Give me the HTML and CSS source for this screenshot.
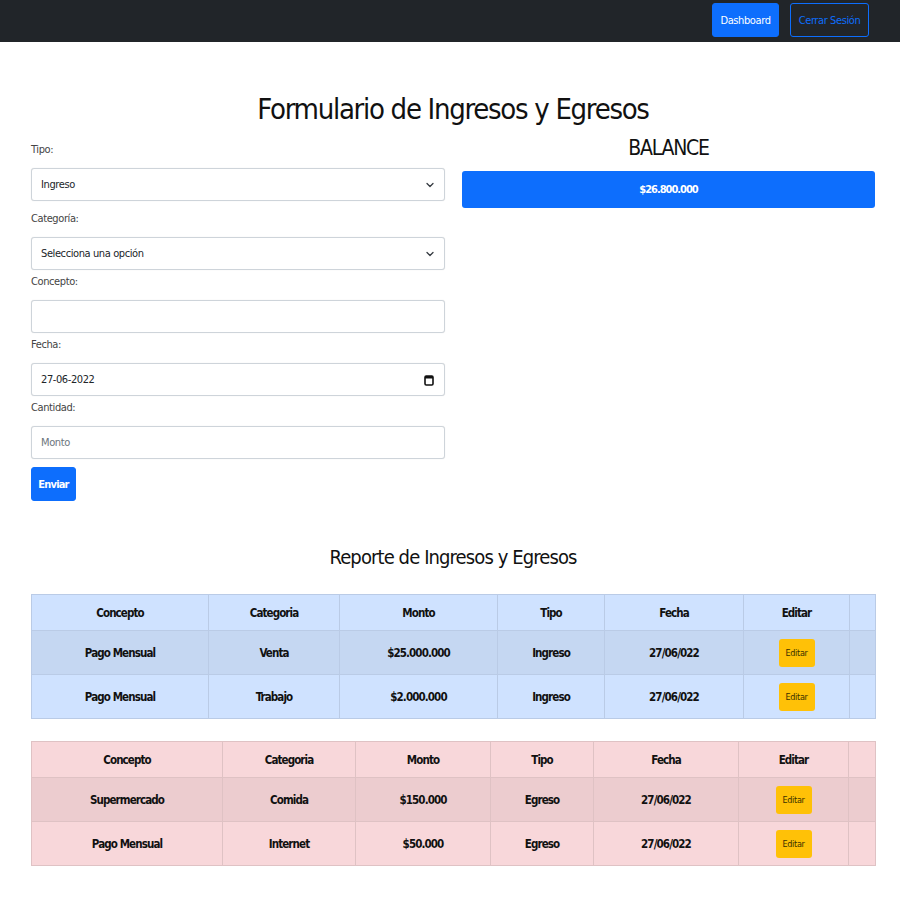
FILE: index.html
```html
<!DOCTYPE html>
<html lang="es">
<head>
<meta charset="utf-8">
<title>Formulario de Ingresos y Egresos</title>
<link rel="stylesheet" href="styles.css">
</head>
<body>
<nav class="navbar">
  <a class="btn btn-primary nav-btn" href="#">Dashboard</a>
  <a class="btn btn-outline nav-btn" href="#">Cerrar Sesión</a>
</nav>
<main class="page">
  <h1 class="title">Formulario de Ingresos y Egresos</h1>
  <div class="row">
    <form class="form">
      <div class="field field-first">
        <label class="label">Tipo:</label>
        <div class="select-wrap">
          <select class="control"><option>Ingreso</option></select>
          <svg class="chev" width="10" height="8" viewBox="0 0 16 16"><path d="M2 5l6 6 6-6" fill="none" stroke="#343a40" stroke-width="2.5" stroke-linecap="round" stroke-linejoin="round"/></svg>
        </div>
      </div>
      <div class="field">
        <label class="label">Categoría:</label>
        <div class="select-wrap">
          <select class="control"><option>Selecciona una opción</option></select>
          <svg class="chev" width="10" height="8" viewBox="0 0 16 16"><path d="M2 5l6 6 6-6" fill="none" stroke="#343a40" stroke-width="2.5" stroke-linecap="round" stroke-linejoin="round"/></svg>
        </div>
      </div>
      <div class="field">
        <label class="label">Concepto:</label>
        <input class="control" type="text">
      </div>
      <div class="field">
        <label class="label">Fecha:</label>
        <div class="control date">
          <span>27-06-2022</span>
          <svg width="10" height="12" viewBox="0 0 10 12"><rect x="1" y="2" width="8" height="9" rx="1.2" fill="none" stroke="#111" stroke-width="1.6"/><rect x="1" y="2" width="8" height="2.5" fill="#111"/></svg>
        </div>
      </div>
      <div class="field">
        <label class="label">Cantidad:</label>
        <input class="control" type="text" placeholder="Monto">
      </div>
      <button class="btn btn-primary submit" type="button">Enviar</button>
    </form>
    <section class="balance">
      <h2 class="balance-title">BALANCE</h2>
      <div class="balance-box">$26.800.000</div>
    </section>
  </div>

  <h2 class="report-title">Reporte de Ingresos y Egresos</h2>

  <table class="tbl tbl-primary">
    <thead>
      <tr><th>Concepto</th><th>Categoria</th><th>Monto</th><th>Tipo</th><th>Fecha</th><th>Editar</th><th></th></tr>
    </thead>
    <tbody>
      <tr><td>Pago Mensual</td><td>Venta</td><td>$25.000.000</td><td>Ingreso</td><td>27/06/022</td><td><button class="btn-edit" type="button">Editar</button></td><td></td></tr>
      <tr><td>Pago Mensual</td><td>Trabajo</td><td>$2.000.000</td><td>Ingreso</td><td>27/06/022</td><td><button class="btn-edit" type="button">Editar</button></td><td></td></tr>
    </tbody>
  </table>

  <table class="tbl tbl-danger">
    <thead>
      <tr><th>Concepto</th><th>Categoria</th><th>Monto</th><th>Tipo</th><th>Fecha</th><th>Editar</th><th></th></tr>
    </thead>
    <tbody>
      <tr><td>Supermercado</td><td>Comida</td><td>$150.000</td><td>Egreso</td><td>27/06/022</td><td><button class="btn-edit" type="button">Editar</button></td><td></td></tr>
      <tr><td>Pago Mensual</td><td>Internet</td><td>$50.000</td><td>Egreso</td><td>27/06/022</td><td><button class="btn-edit" type="button">Editar</button></td><td></td></tr>
    </tbody>
  </table>
</main>
</body>
</html>
```
FILE: styles.css
```css
* { box-sizing: border-box; }
body {
  margin: 0;
  font-family: "DejaVu Sans Condensed", "Liberation Sans", sans-serif;
  font-size: 11px;
  letter-spacing: -0.4px;
  color: #212529;
  background: #fff;
}
.navbar {
  height: 42px;
  background: #212529;
  display: flex;
  justify-content: flex-end;
  align-items: flex-start;
  gap: 11px;
  padding: 3px 31px 0 0;
}
.btn {
  display: inline-flex;
  align-items: center;
  justify-content: center;
  border-radius: 3px;
  border: 1px solid #0d6efd;
  text-decoration: none;
  font-family: inherit;
  font-size: 11px;
  letter-spacing: -0.4px;
  white-space: nowrap;
  cursor: pointer;
}
.btn-primary { background: #0d6efd; color: #fff; }
.btn-outline { background: transparent; color: #0d6efd; }
.nav-btn { height: 34px; padding: 0 6px; }
.navbar .btn-primary { width: 67px; }
.navbar .btn-outline { width: 79px; }

.page { padding: 0 25px 40px 31px; }
.title {
  margin: 46px 0 0;
  font-size: 29px;
  line-height: 42px;
  letter-spacing: -1.3px;
  font-weight: 400;
  text-align: center;
  color: #111;
}
.row {
  margin-top: 6px;
  display: grid;
  grid-template-columns: 414px 413px;
  column-gap: 17px;
  align-items: start;
}
.form { padding-top: 5px; }
.field { margin-bottom: 3px; }
.field-first { margin-bottom: 9px; }
.label {
  display: block;
  height: 18px;
  line-height: 18px;
  margin-bottom: 9px;
  color: #444;
}
.control {
  display: block;
  width: 100%;
  height: 33px;
  border: 1px solid #ced4da;
  border-radius: 3px;
  padding: 0 9px;
  font-family: inherit;
  font-size: 11px;
  letter-spacing: -0.4px;
  color: #212529;
  background: #fff;
  box-shadow: 0 0 1px rgba(0,0,0,0.15);
}
.control::placeholder { color: #6c757d; }
select.control { appearance: none; -webkit-appearance: none; }
.select-wrap { position: relative; }
.chev { position: absolute; right: 10px; top: 13px; pointer-events: none; }
.date {
  display: flex;
  align-items: center;
  justify-content: space-between;
  padding-right: 10px;
}
.submit {
  margin-top: 5px;
  width: 45px;
  height: 34px;
  font-weight: 700;
  letter-spacing: -0.8px;
}
.balance { text-align: center; }
.balance-title {
  margin: 0 0 11px;
  font-size: 21px;
  line-height: 24px;
  letter-spacing: -1.2px;
  font-weight: 400;
  color: #111;
}
.balance-box {
  height: 37px;
  line-height: 37px;
  background: #0d6efd;
  color: #fff;
  font-weight: 700;
  letter-spacing: -1px;
  border-radius: 3px;
}
.report-title {
  margin: 44px 0 25px;
  font-size: 20px;
  line-height: 24px;
  letter-spacing: -0.9px;
  font-weight: 400;
  text-align: center;
  color: #111;
}
.tbl {
  width: 844px;
  border-collapse: collapse;
  table-layout: fixed;
  margin-bottom: 22px;
  font-weight: 700;
  font-size: 11.5px;
  letter-spacing: -0.9px;
  color: #111;
}
.tbl th, .tbl td {
  text-align: center;
  vertical-align: middle;
  padding: 0 4px;
}
.tbl th { height: 36px; }
.tbl td { height: 44px; }
.tbl-primary { border: 1px solid #b3c6e6; background: #cfe2ff; }
.tbl-primary th, .tbl-primary td { border: 1px solid #bacbe6; }
.tbl-primary tbody tr:nth-child(odd) { background: #c5d7f2; }
.tbl-danger { border: 1px solid #dcbcbf; background: #f8d7da; }
.tbl-danger th, .tbl-danger td { border: 1px solid #dfc2c4; }
.tbl-danger tbody tr:nth-child(odd) { background: #eccccf; }

.tbl-primary th:nth-child(1) { width: 177px; }
.tbl-primary th:nth-child(2) { width: 131px; }
.tbl-primary th:nth-child(3) { width: 158px; }
.tbl-primary th:nth-child(4) { width: 107px; }
.tbl-primary th:nth-child(5) { width: 139px; }
.tbl-primary th:nth-child(6) { width: 106px; }
.tbl-primary th:nth-child(7) { width: 26px; }
.tbl-danger th:nth-child(1) { width: 191px; }
.tbl-danger th:nth-child(2) { width: 133px; }
.tbl-danger th:nth-child(3) { width: 135px; }
.tbl-danger th:nth-child(4) { width: 103px; }
.tbl-danger th:nth-child(5) { width: 145px; }
.tbl-danger th:nth-child(6) { width: 110px; }
.tbl-danger th:nth-child(7) { width: 27px; }

.btn-edit {
  width: 36px;
  height: 28px;
  padding: 0;
  border: none;
  border-radius: 3px;
  background: #ffc107;
  color: #3a3000;
  font-family: inherit;
  font-size: 9px;
  letter-spacing: -0.3px;
  font-weight: 400;
  vertical-align: middle;
}
```
